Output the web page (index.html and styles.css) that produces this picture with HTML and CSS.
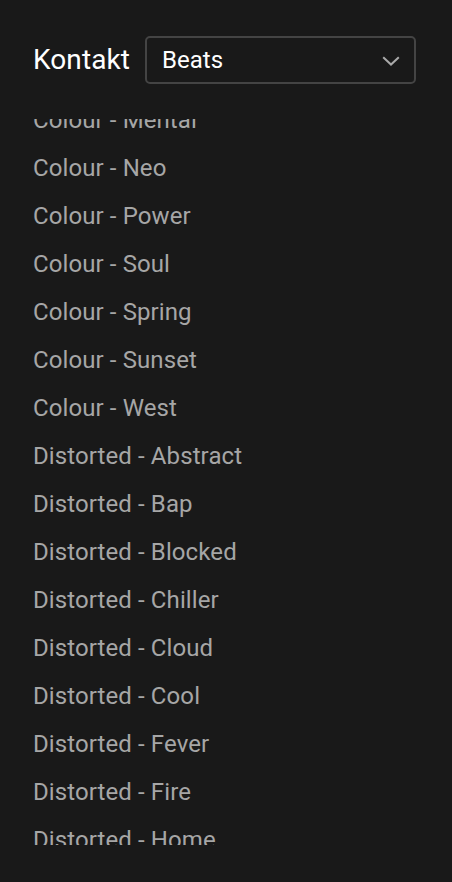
FILE: index.html
```html
<!DOCTYPE html>
<html lang="en">
<head>
<meta charset="utf-8">
<title>Kontakt</title>
<link rel="stylesheet" href="styles.css">
</head>
<body>
<div class="app">
  <header class="header">
    <h1 class="title">Kontakt</h1>
    <div class="select">
      <span class="select-value">Beats</span>
      <svg class="chevron" width="18" height="10" viewBox="0 0 18 10"><path d="M1.2 1.2 L9 8.6 L16.8 1.2" fill="none" stroke="#a9a9a9" stroke-width="2"/></svg>
    </div>
  </header>
  <div class="list-viewport">
    <ul class="list">
      <li class="item">Colour - Mental</li>
      <li class="item">Colour - Neo</li>
      <li class="item">Colour - Power</li>
      <li class="item">Colour - Soul</li>
      <li class="item">Colour - Spring</li>
      <li class="item">Colour - Sunset</li>
      <li class="item">Colour - West</li>
      <li class="item">Distorted - Abstract</li>
      <li class="item">Distorted - Bap</li>
      <li class="item">Distorted - Blocked</li>
      <li class="item">Distorted - Chiller</li>
      <li class="item">Distorted - Cloud</li>
      <li class="item">Distorted - Cool</li>
      <li class="item">Distorted - Fever</li>
      <li class="item">Distorted - Fire</li>
      <li class="item">Distorted - Home</li>
      <li class="item">Distorted - Ice</li>
    </ul>
  </div>
</div>
</body>
</html>
```
FILE: styles.css
```css
html, body {
  margin: 0;
  padding: 0;
  background: #191919;
}
body {
  font-family: Roboto, "Liberation Sans", sans-serif;
  width: 452px;
  height: 882px;
  overflow: hidden;
}
.app {
  display: flex;
  flex-direction: column;
  padding: 36px 36px 0 33px;
}
.header {
  display: flex;
  align-items: center;
  gap: 15px;
  height: 48px;
}
.title {
  margin: 0;
  font-size: 28px;
  font-weight: 400;
  color: #ffffff;
  line-height: 48px;
  letter-spacing: 0.1px;
}
.select {
  flex: 1;
  box-sizing: border-box;
  height: 48px;
  border: 2px solid #444444;
  border-radius: 5px;
  display: flex;
  align-items: center;
  justify-content: space-between;
  padding: 0 14px 0 15px;
}
.select-value {
  font-size: 24px;
  font-weight: 400;
  color: #ffffff;
}
.chevron {
  display: block;
  margin-top: 2px;
}
.list-viewport {
  margin-top: 35px;
  height: 726px;
  overflow: hidden;
}
.list {
  list-style: none;
  margin: -23px 0 0 0;
  padding: 0;
}
.item {
  font-size: 24px;
  line-height: 48px;
  color: #a6a6a6;
  white-space: nowrap;
  letter-spacing: 0.1px;
}
```
